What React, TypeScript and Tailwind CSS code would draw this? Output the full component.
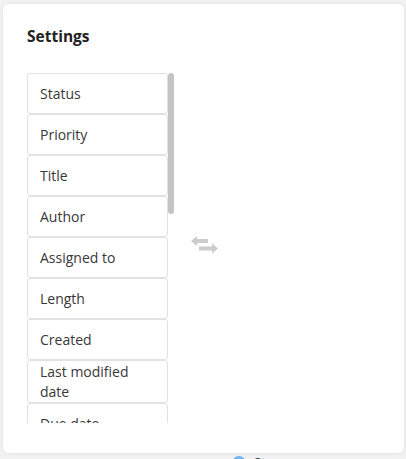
import React from 'react';

const fields = [
  'Status',
  'Priority',
  'Title',
  'Author',
  'Assigned to',
  'Length',
  'Created',
  'Last modified date',
  'Due date',
];

function SwapIcon() {
  return (
    <svg width="28" height="18" viewBox="0 0 28 18" fill="#cccccc">
      <path d="M0 5 L6 0 L6 3 L17 3 L17 7 L6 7 L6 10 Z" />
      <path d="M27 12.5 L21 7.5 L21 10.5 L8 10.5 L8 14.5 L21 14.5 L21 17.5 Z" />
    </svg>
  );
}

export default function App() {
  return (
    <div className="w-[406px] h-[459px] bg-[#f2f2f2] relative overflow-hidden" style={{ fontFamily: '"Open Sans", "Liberation Sans", sans-serif' }}>
      {/* faint page behind the dialog */}
      <div className="absolute left-[232px] top-[453px] flex items-center gap-2">
        <span className="w-[14px] h-[14px] rounded-full bg-[#6fb5f0]" />
        <span className="text-[13px] text-[#444]">St</span>
      </div>

      {/* dialog */}
      <div className="absolute left-[3px] top-[4px] w-[401px] h-[449px] bg-white rounded-[6px] shadow-[0_0_4px_rgba(0,0,0,0.08)] pl-[24px] pt-[22px]">
        <h2 className="text-[15.5px] font-bold text-[#222] leading-[21px]">Settings</h2>

        <div className="mt-[26px] flex items-center">
          <div className="relative w-[148px] h-[350px] overflow-hidden">
            <div className="w-[141px] flex flex-col">
              {fields.map((f) => (
                <div
                  key={f}
                  className="min-h-[41px] flex items-center border border-[#e2e2e2] rounded-[3px] px-[12px] pt-px pb-0 text-[14px] leading-[20px] text-[#383838] bg-white"
                >
                  {f}
                </div>
              ))}
            </div>
            <div className="absolute left-[141px] top-0 w-[6px] h-[141px] rounded-full bg-[#c4c4c4]" />
          </div>

          <div className="ml-[16px] mt-[-6px]">
            <SwapIcon />
          </div>
        </div>
      </div>
    </div>
  );
}
